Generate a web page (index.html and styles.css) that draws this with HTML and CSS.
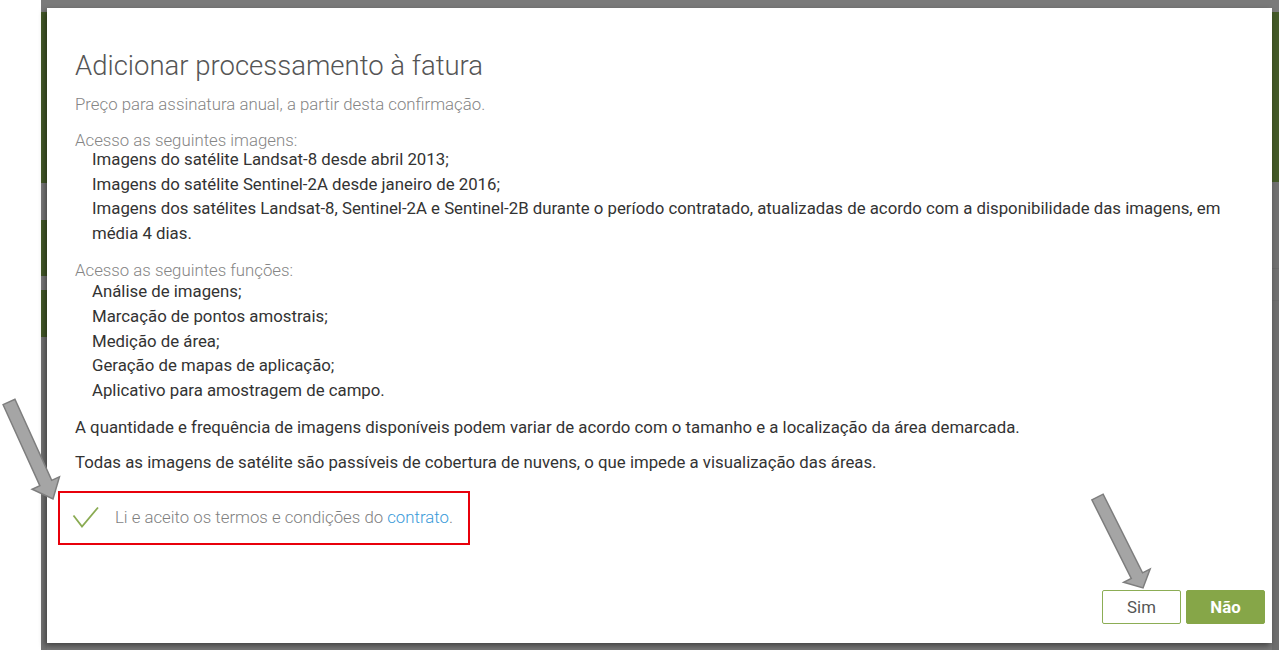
FILE: index.html
```html
<!DOCTYPE html>
<html lang="pt">
<head>
<meta charset="utf-8">
<title>Adicionar processamento à fatura</title>
<link rel="stylesheet" href="styles.css">
</head>
<body>
<div class="page">
  <div class="left-strip"></div>
  <div class="backdrop">
    <div class="modal">
      <div class="modal-body">
        <h1 class="title">Adicionar processamento à fatura</h1>
        <p class="subtitle">Preço para assinatura anual, a partir desta confirmação.</p>

        <div class="section">
          <div class="section-head">Acesso as seguintes imagens:</div>
          <ul class="items">
            <li>Imagens do satélite Landsat-8 desde abril 2013;</li>
            <li>Imagens do satélite Sentinel-2A desde janeiro de 2016;</li>
            <li>Imagens dos satélites Landsat-8, Sentinel-2A e Sentinel-2B durante o período contratado, atualizadas de acordo com a disponibilidade das imagens, em média 4 dias.</li>
          </ul>
        </div>

        <div class="section">
          <div class="section-head">Acesso as seguintes funções:</div>
          <ul class="items">
            <li>Análise de imagens;</li>
            <li>Marcação de pontos amostrais;</li>
            <li>Medição de área;</li>
            <li>Geração de mapas de aplicação;</li>
            <li>Aplicativo para amostragem de campo.</li>
          </ul>
        </div>

        <p class="note">A quantidade e frequência de imagens disponíveis podem variar de acordo com o tamanho e a localização da área demarcada.</p>
        <p class="note">Todas as imagens de satélite são passíveis de cobertura de nuvens, o que impede a visualização das áreas.</p>

        <label class="accept">
          <svg class="check" width="28" height="24" viewBox="0 0 28 24">
            <polyline points="1.5,10.5 10,21.5 26,2.5" fill="none" stroke="#8aab52" stroke-width="1.8"/>
          </svg>
          <span class="accept-text">Li e aceito os termos e condições do <a class="link" href="#">contrato</a>.</span>
        </label>
      </div>
      <div class="modal-footer">
        <button class="btn btn-outline">Sim</button>
        <button class="btn btn-primary">Não</button>
      </div>
    </div>
  </div>
</div>

<svg class="annotations" width="1279" height="650" viewBox="0 0 1279 650">
  <rect x="59" y="492" width="410" height="52" fill="none" stroke="#e8000b" stroke-width="2"/>
  <g transform="translate(9,402) rotate(-24.4)">
    <polygon points="-6.5,0 6.5,0 6.5,89 15,89 0,106.5 -15,89 -6.5,89" fill="#a5a5a5" stroke="#7e7e7e" stroke-width="1.5" stroke-linejoin="miter"/>
  </g>
  <g transform="translate(1097.5,497) rotate(-26.6)">
    <polygon points="-6.3,0 6.3,0 6.3,88 14.8,88 0,101.7 -14.8,88 -6.3,88" fill="#a5a5a5" stroke="#7e7e7e" stroke-width="1.5" stroke-linejoin="miter"/>
  </g>
</svg>
</body>
</html>
```

FILE: styles.css
```css
html, body {
  margin: 0;
  padding: 0;
  width: 1279px;
  height: 650px;
  overflow: hidden;
  background: #ffffff;
  font-family: Roboto, "Liberation Sans", Arial, sans-serif;
}

.page {
  display: flex;
  width: 1279px;
  height: 650px;
}

.left-strip {
  width: 41px;
  flex: none;
  background: #ffffff;
}

.backdrop {
  flex: 1;
  height: 650px;
  background-color: #7a7a7a;
  background-image:
    linear-gradient(to bottom, #7a7a7a 0 12px, #445a28 12px 183px, #7a7a7a 183px 220px, #445a28 220px 276px, #7a7a7a 276px 290px, #445a28 290px 337px, #747474 337px),
    linear-gradient(to bottom, #7a7a7a 0 12px, #445a28 12px 182px, #717171 182px 268px, #6a6a6a 268px 269px, #717171 269px 300px, #6a6a6a 300px 301px, #6e6e6e 301px);
  background-size: 6px 100%, 7px 100%;
  background-position: left top, right top;
  background-repeat: no-repeat;
}

.modal {
  margin: 8px 0 0 6px;
  width: 1225px;
  height: 635px;
  background: #ffffff;
  box-shadow: -2px 3px 6px rgba(0, 0, 0, 0.45);
  display: flex;
  flex-direction: column;
  box-sizing: border-box;
}

.modal-body {
  padding: 41px 28px 0 28px;
}

.title {
  margin: 0;
  font-size: 27.5px;
  line-height: 34px;
  font-weight: 300;
  color: #555555;
}

.subtitle {
  margin: 11px 0 0 0;
  font-size: 16.8px;
  line-height: 20px;
  font-weight: 300;
  color: #858585;
}

.section {
  margin-top: 17px;
}

.section + .section {
  margin-top: 16px;
}

.section-head {
  font-size: 16.8px;
  line-height: 18px;
  font-weight: 300;
  color: #858585;
}

.items {
  list-style: none;
  margin: -2px 0 0 0;
  padding: 0 0 0 17px;
}

.section + .section .items {
  margin-top: 0;
}

.items li {
  font-size: 16.8px;
  line-height: 24.6px;
  color: #333333;
}

.note {
  margin: 13px 0 0 0;
  font-size: 16.8px;
  line-height: 24px;
  color: #333333;
}

.note + .note {
  margin-top: 11px;
}

.accept {
  display: flex;
  align-items: center;
  gap: 15px;
  margin: 31px 0 0 -3px;
}

.check {
  display: block;
  flex: none;
}

.accept-text {
  font-size: 16.8px;
  line-height: 24px;
  font-weight: 300;
  color: #7f7f7f;
}

.link {
  color: #3a9ad9;
  text-decoration: none;
}

.modal-footer {
  margin-top: auto;
  display: flex;
  justify-content: flex-end;
  gap: 5px;
  padding: 0 7px 19px 0;
}

.btn {
  width: 79px;
  height: 34px;
  box-sizing: border-box;
  border-radius: 2px;
  font-family: Roboto, "Liberation Sans", Arial, sans-serif;
  font-size: 16.8px;
  padding: 0;
  cursor: pointer;
}

.btn-outline {
  background: #ffffff;
  border: 1px solid #8cad55;
  color: #555555;
}

.btn-primary {
  background: #86a648;
  border: 1px solid #86a648;
  color: #ffffff;
  font-weight: 700;
}

.annotations {
  position: absolute;
  top: 0;
  left: 0;
  pointer-events: none;
}
```
